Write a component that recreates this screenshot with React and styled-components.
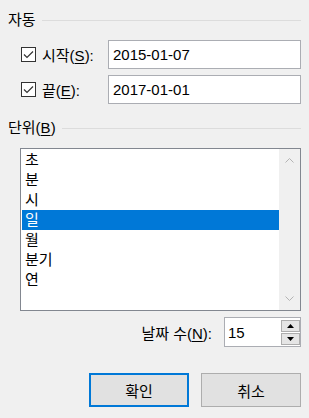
import React from "react";
import styled, { createGlobalStyle } from "styled-components";

const Global = createGlobalStyle`
  html, body { margin: 0; padding: 0; background: #f0f0f0; }
  body { font-family: "Liberation Sans", "Noto Sans CJK KR", sans-serif; font-size: 15px; color: #000; }
`;

const Dialog = styled.div`
  width: 309px;
  height: 418px;
  box-sizing: border-box;
  background: #f0f0f0;
  padding-top: 10px;
  display: flex;
  flex-direction: column;
`;

const GroupHeader = styled.div`
  display: flex;
  align-items: center;
  gap: 6px;
  height: 20px;
  padding: 0 8px;
  margin-top: ${(p) => p.$mt || 0}px;
`;

const HeaderText = styled.span`
  line-height: 20px;
  white-space: nowrap;
`;

const Rule = styled.div`
  flex: 1;
  height: 1px;
  background: #dcdcdc;
`;

const Key = styled.span`
  text-decoration: underline;
  text-underline-offset: 2px;
`;

const FieldRow = styled.div`
  display: grid;
  grid-template-columns: 87px 1fr;
  align-items: center;
  padding: 0 8px 0 21px;
  margin-top: ${(p) => p.$mt || 0}px;
`;

const CheckLabel = styled.label`
  display: flex;
  align-items: center;
  gap: 6px;
  white-space: nowrap;
`;

const Box = styled.span`
  width: 15px;
  height: 15px;
  box-sizing: border-box;
  border: 1px solid #333;
  background: #fff;
  display: flex;
  align-items: center;
  justify-content: center;
`;

const TextField = styled.div`
  height: 29px;
  box-sizing: border-box;
  border: 1px solid #abadb3;
  background: #fff;
  display: flex;
  align-items: center;
  padding-left: 4px;
`;

const ListBox = styled.div`
  margin: 10px 8px 0 20px;
  height: 163px;
  box-sizing: border-box;
  border: 1px solid #828790;
  background: #fff;
  display: flex;
`;

const Items = styled.div`
  flex: 1;
  padding: 1px 0 0 1px;
`;

const Item = styled.div`
  height: 20px;
  line-height: 20px;
  padding-left: 3px;
  background: ${(p) => (p.$selected ? "#0078d7" : "transparent")};
  color: ${(p) => (p.$selected ? "#fff" : "#000")};
`;

const ScrollBar = styled.div`
  width: 21px;
  background: #f0f0f0;
  display: flex;
  flex-direction: column;
  justify-content: space-between;
`;

const ScrollBtn = styled.div`
  height: 23px;
  display: flex;
  align-items: center;
  justify-content: center;
`;

const SpinRow = styled.div`
  display: flex;
  align-items: center;
  justify-content: flex-end;
  gap: 12px;
  padding-right: 8px;
  margin-top: 6px;
`;

const SpinField = styled.div`
  width: 77px;
  height: 30px;
  box-sizing: border-box;
  border: 1px solid #abadb3;
  background: #fff;
  display: flex;
`;

const SpinValue = styled.div`
  flex: 1;
  padding-left: 3px;
  display: flex;
  align-items: center;
`;

const SpinButtons = styled.div`
  width: 19px;
  display: flex;
  flex-direction: column;
  gap: 1px;
  padding: 2px 0 1px 0;
`;

const SpinBtn = styled.div`
  height: 12px;
  box-sizing: border-box;
  border: 1px solid #adadad;
  background: #e5e5e5;
  display: flex;
  align-items: center;
  justify-content: center;
`;

const ButtonRow = styled.div`
  display: flex;
  justify-content: flex-end;
  gap: 12px;
  padding-right: 8px;
  margin-top: 26px;
`;

const Button = styled.button`
  width: 100px;
  height: 34px;
  box-sizing: border-box;
  background: #e1e1e1;
  border: ${(p) => (p.$default ? "2px solid #0078d7" : "1px solid #adadad")};
  font: inherit;
  color: #000;
  padding: 0;
`;

const Check = () => (
  <svg width="13" height="13" viewBox="0 0 13 13">
    <polyline points="2,6.5 5,9.5 11,3.5" fill="none" stroke="#333" strokeWidth="1.2" />
  </svg>
);

const Chevron = ({ up }) => (
  <svg width="9" height="5" viewBox="0 0 9 5">
    <polyline
      points={up ? "0.5,4.5 4.5,0.5 8.5,4.5" : "0.5,0.5 4.5,4.5 8.5,0.5"}
      fill="none"
      stroke="#b4b4b4"
      strokeWidth="1"
    />
  </svg>
);

const Tri = ({ up }) => (
  <svg width="7" height="4" viewBox="0 0 7 4">
    <polygon points={up ? "0,4 3.5,0 7,4" : "0,0 3.5,4 7,0"} fill="#000" />
  </svg>
);

const units = ["초", "분", "시", "일", "월", "분기", "연"];

export default function App() {
  return (
    <>
      <Global />
      <Dialog>
        <GroupHeader>
          <HeaderText>자동</HeaderText>
          <Rule />
        </GroupHeader>
        <FieldRow $mt={10}>
          <CheckLabel>
            <Box><Check /></Box>
            <span>시작(<Key>S</Key>):</span>
          </CheckLabel>
          <TextField>2015-01-07</TextField>
        </FieldRow>
        <FieldRow $mt={6}>
          <CheckLabel>
            <Box><Check /></Box>
            <span>끝(<Key>E</Key>):</span>
          </CheckLabel>
          <TextField>2017-01-01</TextField>
        </FieldRow>
        <GroupHeader $mt={14}>
          <HeaderText>단위(<Key>B</Key>)</HeaderText>
          <Rule />
        </GroupHeader>
        <ListBox>
          <Items>
            {units.map((u) => (
              <Item key={u} $selected={u === "일"}>{u}</Item>
            ))}
          </Items>
          <ScrollBar>
            <ScrollBtn><Chevron up /></ScrollBtn>
            <ScrollBtn><Chevron /></ScrollBtn>
          </ScrollBar>
        </ListBox>
        <SpinRow>
          <span>날짜 수(<Key>N</Key>):</span>
          <SpinField>
            <SpinValue>15</SpinValue>
            <SpinButtons>
              <SpinBtn><Tri up /></SpinBtn>
              <SpinBtn><Tri /></SpinBtn>
            </SpinButtons>
          </SpinField>
        </SpinRow>
        <ButtonRow>
          <Button $default>확인</Button>
          <Button>취소</Button>
        </ButtonRow>
      </Dialog>
    </>
  );
}
